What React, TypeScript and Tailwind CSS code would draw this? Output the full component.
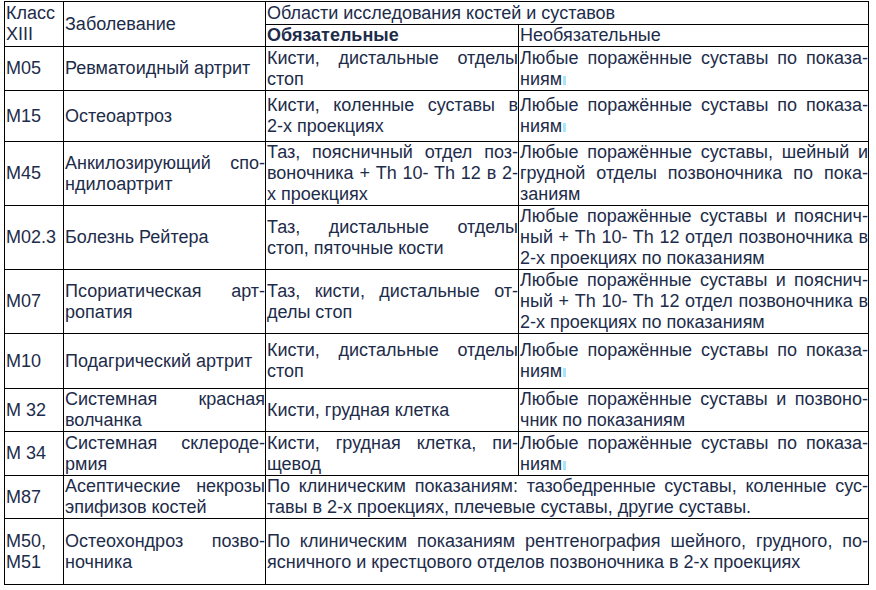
type Cell = {
  lines: string[];
  colSpan?: number;
  mark?: boolean;
};

type Row = {
  h: string;
  code: string[];
  name: string[];
  cells: Cell[];
};

const anyJoints: Cell = {
  lines: ["Любые поражённые суставы по показа-", "ниям"],
  mark: true,
};

const lumbar: Cell = {
  lines: [
    "Любые поражённые суставы и пояснич-",
    "ный + Th 10- Th 12 отдел позвоночника в",
    "2-х проекциях по показаниям",
  ],
};

const rows: Row[] = [
  {
    h: "h-[44px]",
    code: ["M05"],
    name: ["Ревматоидный артрит"],
    cells: [{ lines: ["Кисти, дистальные отделы", "стоп"] }, anyJoints],
  },
  {
    h: "h-[51px]",
    code: ["M15"],
    name: ["Остеоартроз"],
    cells: [{ lines: ["Кисти, коленные суставы в", "2-х проекциях"] }, anyJoints],
  },
  {
    h: "h-[64px]",
    code: ["M45"],
    name: ["Анкилозирующий спо-", "ндилоартрит"],
    cells: [
      {
        lines: [
          "Таз, поясничный отдел поз-",
          "воночника + Th 10- Th 12 в 2-",
          "х проекциях",
        ],
      },
      {
        lines: [
          "Любые поражённые суставы, шейный и",
          "грудной отделы позвоночника по пока-",
          "заниям",
        ],
      },
    ],
  },
  {
    h: "h-[64px]",
    code: ["M02.3"],
    name: ["Болезнь Рейтера"],
    cells: [{ lines: ["Таз, дистальные отделы", "стоп, пяточные кости"] }, lumbar],
  },
  {
    h: "h-[64px]",
    code: ["M07"],
    name: ["Псориатическая арт-", "ропатия"],
    cells: [{ lines: ["Таз, кисти, дистальные от-", "делы стоп"] }, lumbar],
  },
  {
    h: "h-[55px]",
    code: ["M10"],
    name: ["Подагрический артрит"],
    cells: [{ lines: ["Кисти, дистальные отделы", "стоп"] }, anyJoints],
  },
  {
    h: "h-[43px]",
    code: ["M 32"],
    name: ["Системная красная", "волчанка"],
    cells: [
      { lines: ["Кисти, грудная клетка"] },
      { lines: ["Любые поражённые суставы и позвоно-", "чник по показаниям"] },
    ],
  },
  {
    h: "h-[44px]",
    code: ["M 34"],
    name: ["Системная склероде-", "рмия"],
    cells: [{ lines: ["Кисти, грудная клетка, пи-", "щевод"] }, anyJoints],
  },
  {
    h: "h-[43px]",
    code: ["M87"],
    name: ["Асептические некрозы", "эпифизов костей"],
    cells: [
      {
        colSpan: 2,
        lines: [
          "По клиническим показаниям: тазобедренные суставы, коленные сус-",
          "тавы в 2-х проекциях, плечевые суставы, другие суставы.",
        ],
      },
    ],
  },
  {
    h: "h-[66px]",
    code: ["M50,", "M51"],
    name: ["Остеохондроз позво-", "ночника"],
    cells: [
      {
        colSpan: 2,
        lines: [
          "По клиническим показаниям рентгенография шейного, грудного, по-",
          "ясничного и крестцового отделов позвоночника в 2-х проекциях",
        ],
      },
    ],
  },
];

function Lines({ lines, mark }: { lines: string[]; mark?: boolean }) {
  return (
    <>
      {lines.map((line, i) => {
        const last = i === lines.length - 1;
        return (
          <div
            key={i}
            className={last ? "text-left whitespace-nowrap" : "text-justify [text-align-last:justify] whitespace-nowrap"}
          >
            {line}
            {last && mark && (
              <span className="inline-block w-[3px] h-[9px] ml-[1px] bg-[#a6e6f7] align-baseline" />
            )}
          </div>
        );
      })}
    </>
  );
}

const td = "border border-black align-middle pl-[1px] pr-0 py-0";

export default function App() {
  return (
    <div
      className="w-[876px] h-[590px] bg-white overflow-hidden pl-[4px] pt-[1px] text-[18px] leading-[21px] text-[#1d2c4a]"
      style={{ fontFamily: '"Liberation Sans", Arial, sans-serif' }}
    >
      <table className="table-fixed border-collapse w-[864px]">
        <colgroup>
          <col className="w-[59px]" />
          <col className="w-[202px]" />
          <col className="w-[253px]" />
          <col className="w-[350px]" />
        </colgroup>
        <thead>
          <tr className="h-[23px]">
            <td rowSpan={2} className={td}>
              <div>Класс</div>
              <div>XIII</div>
            </td>
            <td rowSpan={2} className={td}>
              Заболевание
            </td>
            <td colSpan={2} className={td}>
              Области исследования костей и суставов
            </td>
          </tr>
          <tr className="h-[22px]">
            <td className={`${td} font-bold`}>Обязательные</td>
            <td className={td}>Необязательные</td>
          </tr>
        </thead>
        <tbody>
          {rows.map((r) => (
            <tr key={r.code.join("")} className={r.h}>
              <td className={td}>
                <Lines lines={r.code} />
              </td>
              <td className={td}>
                <Lines lines={r.name} />
              </td>
              {r.cells.map((c, i) => (
                <td key={i} colSpan={c.colSpan} className={td}>
                  <Lines lines={c.lines} mark={c.mark} />
                </td>
              ))}
            </tr>
          ))}
        </tbody>
      </table>
    </div>
  );
}
